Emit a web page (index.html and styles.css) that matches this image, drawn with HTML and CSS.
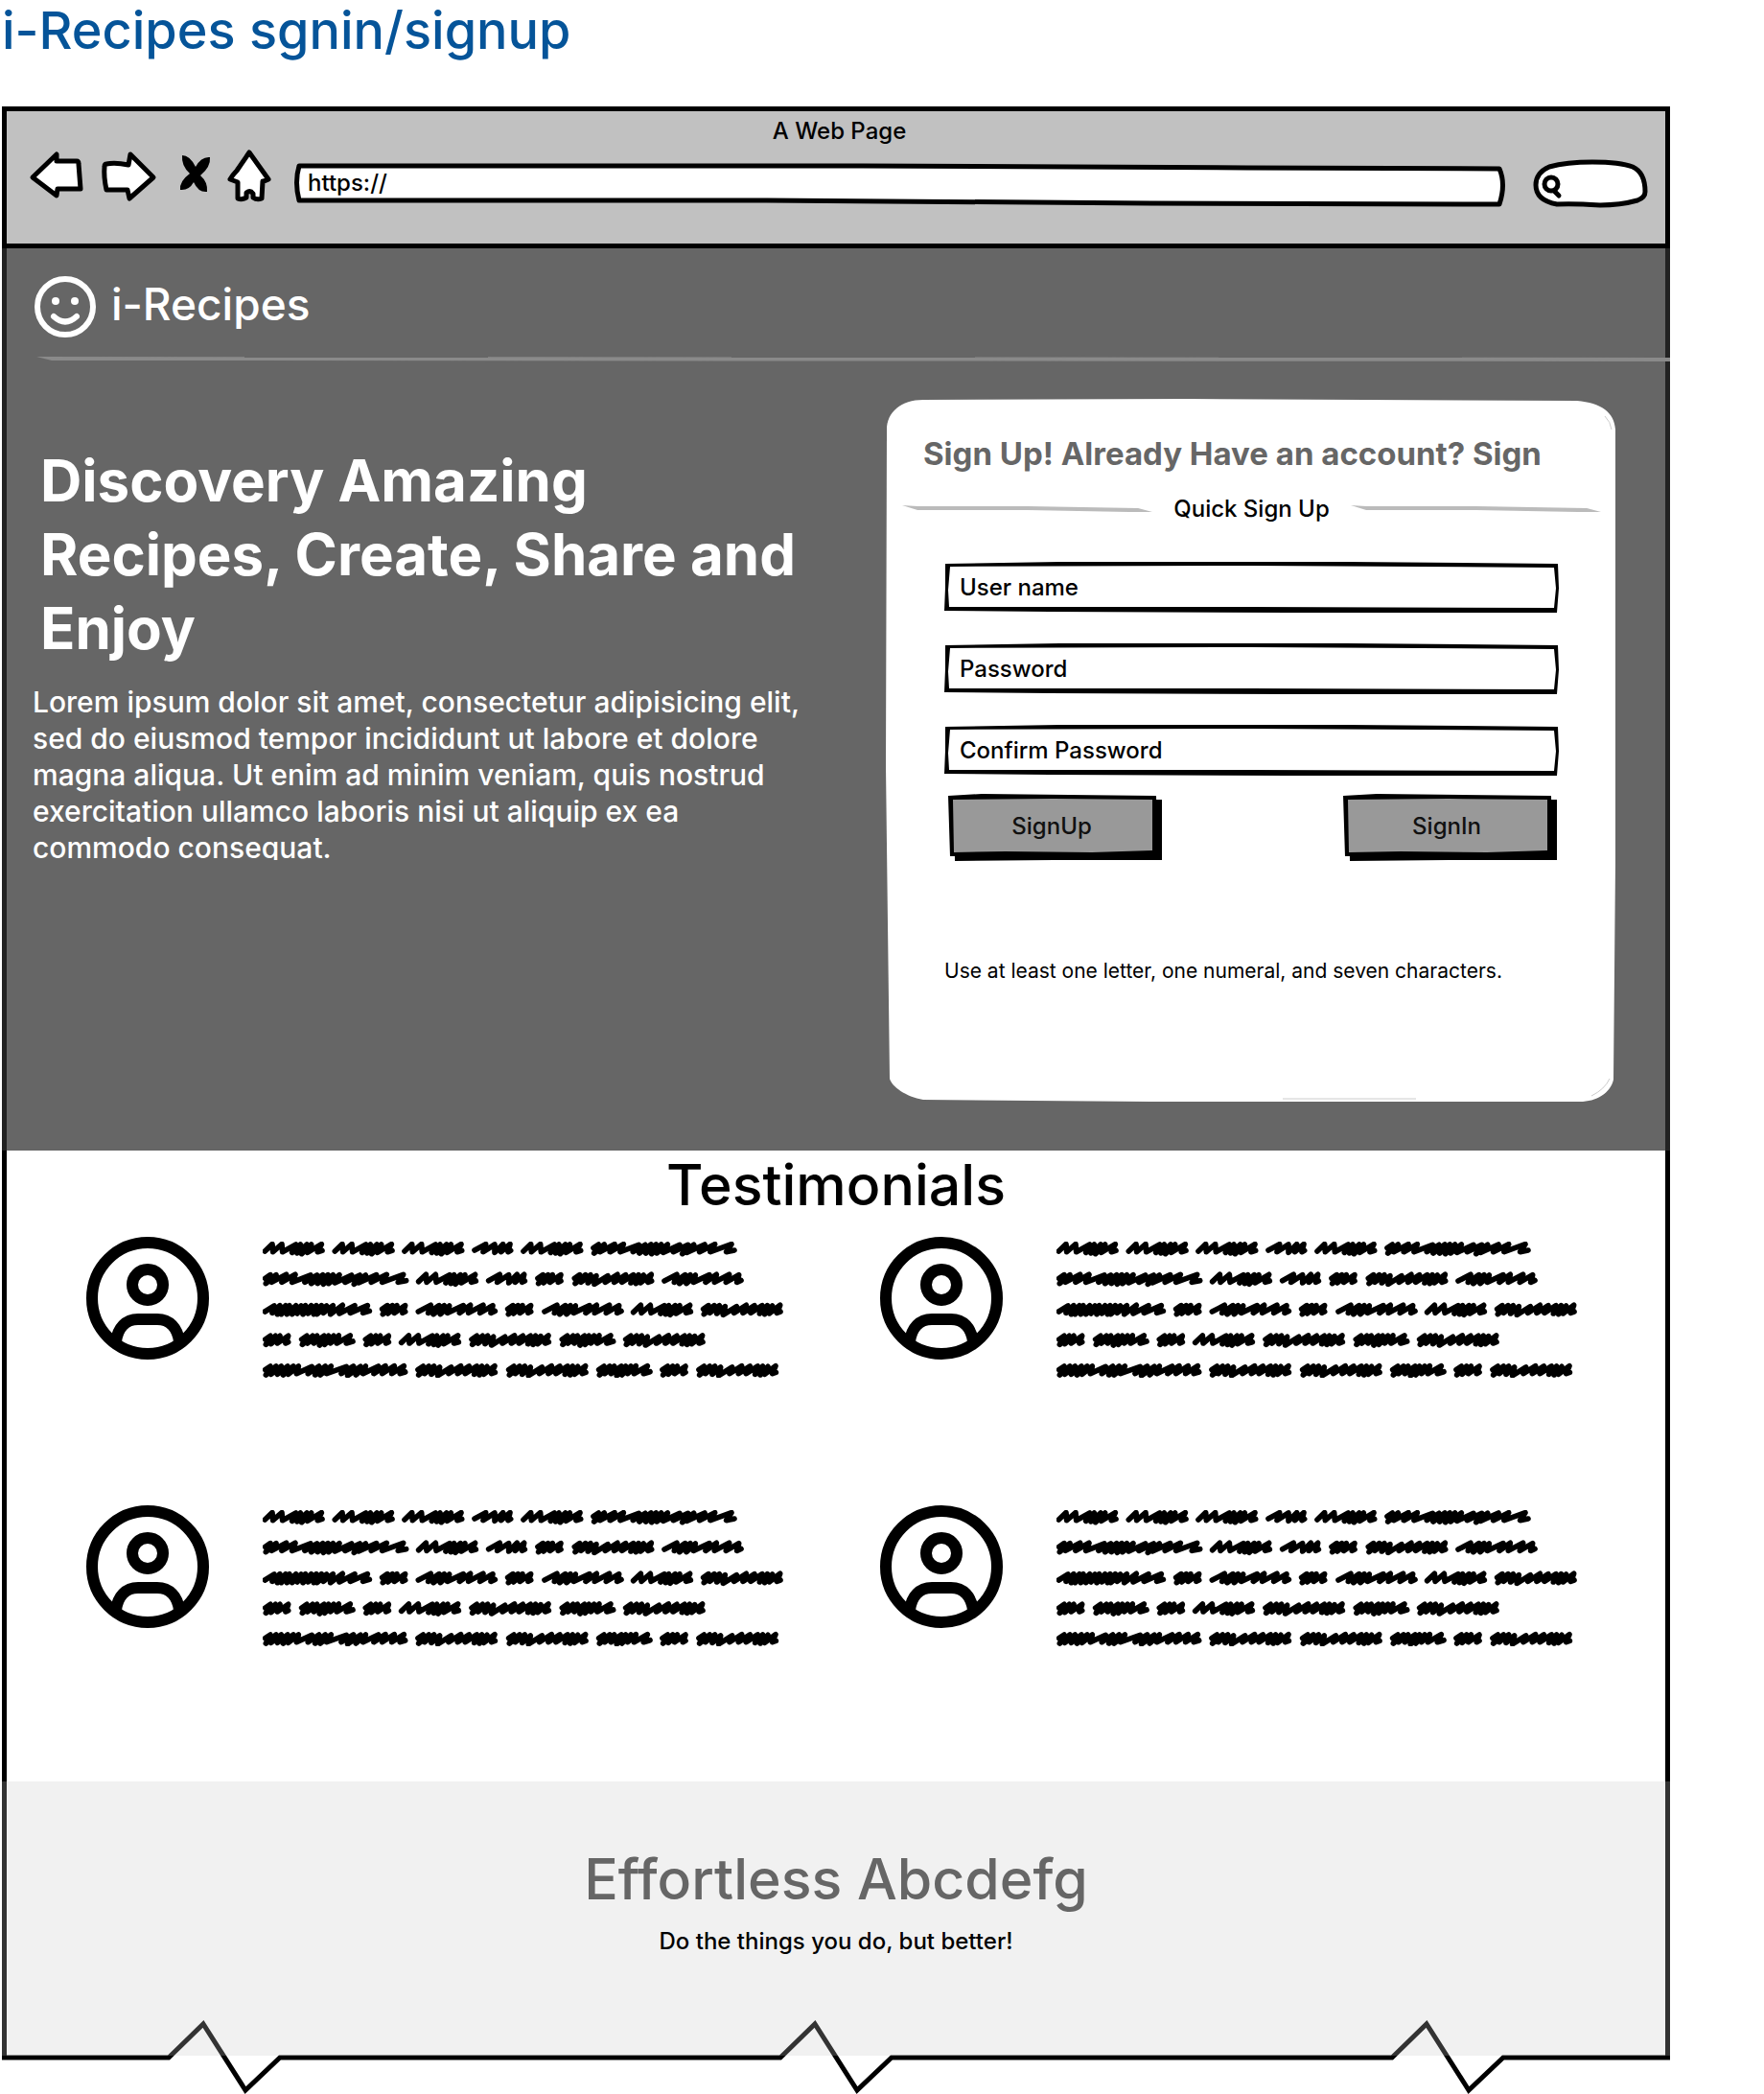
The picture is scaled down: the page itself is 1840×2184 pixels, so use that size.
FILE: index.html
```html
<!DOCTYPE html>
<html lang="en">
<head>
<meta charset="utf-8">
<meta name="viewport" content="width=device-width, initial-scale=1">
<title>i-Recipes</title>
<link rel="stylesheet" href="styles.css">
</head>
<body>
<svg class="sprite" aria-hidden="true">
  <!-- hand-drawn outlines, stretched to their box -->
  <symbol id="field" viewBox="0 0 640 54" preserveAspectRatio="none">
    <path d="M1 2 L120 0 H420 L639 2 L640 28 L638 54 L360 54 L110 53 L0 52 L1 27Z"/>
    <path fill="#fff" d="M6 5 L320 4 L635 6 L637 28 L635 49 L320 48 L5 48 L4 30Z"/>
  </symbol>
  <symbol id="button" viewBox="0 0 224 70" preserveAspectRatio="none">
    <path d="M6 6 H223 V69 L110 69 L7 70Z"/>
    <path d="M0 2 L35 0 L217 2 L218 40 V65 H2Z"/>
    <path fill="#999" d="M5 6 L110 5 L213 6 V59 L150 61 L60 60 L6 61Z"/>
  </symbol>
  <symbol id="dash" viewBox="0 0 260 8" preserveAspectRatio="none">
    <path fill="#bbb" d="M0 0 L16 1 L130 1 L245 3 L260 7 L236 7 L130 5 L16 5Z"/>
  </symbol>
  <symbol id="avatar" viewBox="0 0 128 128">
    <g fill="none" stroke="#000" stroke-width="12">
      <circle cx="64" cy="64" r="58"/>
      <circle cx="64" cy="50" r="16"/>
      <path d="M31 109 C33 95 41 86 54 86 H74 C87 86 95 95 97 109"/>
    </g>
  </symbol>
  <!-- scribbled words -->
  <g id="w1"><path d="M7 30 L30 8 32 32 60 8 62 32 104 9 92 34 118 9 108 36 138 9 122 38 152 9 140 34 184 8 172 32 186 28"/></g>
  <g id="w2"><path d="M7 27 L42 8 34 32 70 9 70 34 96 8 90 32 118 8 112 32 120 28"/></g>
  <g id="w3"><path d="M8 20 L24 9 10 36 40 9 26 34 54 9 46 32 80 9 72 32 80 28"/></g>
  <g id="w4"><path d="M8 20 L24 9 10 36 42 9 28 32 58 9 50 34 76 12 70 38 112 12 104 32 142 8 132 32 168 9 156 32 192 9 184 34 208 9 200 36 224 10 214 34 248 8 238 32 249 28"/></g>
  <g id="w5"><path d="M7 28 L46 8 38 32 72 9 54 36 88 9 76 36 104 10 98 32 148 9 136 32 170 8 164 32 210 8 200 32 240 9 234 32 247 26"/></g>
  <g id="w6"><path d="M8 20 L24 9 10 36 42 9 26 32 56 9 46 32 78 9 64 38 92 9 80 36 108 9 98 32 124 8 118 32 160 8 148 32 168 26"/></g>
  <g id="w7"><path d="M7 28 L36 10 30 32 54 9 46 36 72 9 58 36 84 9 76 36 104 9 92 36 120 10 108 34 134 9 126 36 152 9 142 34 168 9 160 36 184 9 170 36 200 10 190 32 220 9 212 36 250 8 240 34 288 9 274 32 328 9 314 32 334 26"/></g>
  <g id="w8"><path d="M8 20 L24 9 10 36 42 9 28 32 74 8 60 32 102 8 92 32 150 10 132 32 170 10 152 36 188 9 172 36 204 9 190 38 220 9 206 36 240 9 226 34 278 10 258 32 304 10 286 38 322 10 300 34 356 9 340 32 388 8 374 32 440 8 424 32 449 27"/></g>
  <g id="w9"><path d="M8 20 L24 9 10 36 42 9 26 34 58 9 46 34 78 9 64 36 96 9 80 34 112 9 106 32 154 10 142 32 176 9 164 36 196 9 180 36 214 9 200 32 262 10 246 32 284 9 266 38 306 10 292 36 322 9 314 32 362 9 348 32 384 8 374 32 412 8 404 32 442 8 430 32 446 27"/></g>
  <symbol id="quote" viewBox="0 0 1632 426">
    <g fill="none" stroke="#000" stroke-width="17" stroke-linecap="round" stroke-linejoin="round">
      <use href="#w1"/><use href="#w1" x="219"/><use href="#w1" x="437"/><use href="#w2" x="656"/><use href="#w1" x="809"/><use href="#w8" x="1027"/>
      <use href="#w8" y="95"/><use href="#w1" x="481" y="95"/><use href="#w2" x="700" y="95"/><use href="#w3" x="853" y="95"/><use href="#w4" x="968" y="95"/><use href="#w5" x="1250" y="95"/>
      <use href="#w7" y="191"/><use href="#w3" x="366" y="191"/><use href="#w5" x="480" y="191"/><use href="#w3" x="759" y="191"/><use href="#w5" x="875" y="191"/><use href="#w1" x="1153" y="191"/><use href="#w4" x="1371" y="191"/>
      <use href="#w3" y="286"/><use href="#w6" x="114" y="286"/><use href="#w3" x="314" y="286"/><use href="#w1" x="427" y="286"/><use href="#w4" x="646" y="286"/><use href="#w6" x="929" y="286"/><use href="#w4" x="1128" y="286"/>
      <use href="#w9" y="381"/><use href="#w4" x="478" y="381"/><use href="#w4" x="762" y="381"/><use href="#w6" x="1044" y="381"/><use href="#w3" x="1243" y="381"/><use href="#w4" x="1357" y="381"/>
    </g>
  </symbol>
</svg>

<h1 class="page-title">i-Recipes sgnin/signup</h1>

<div class="browser">
  <div class="toolbar">
    <p class="toolbar-title">A Web Page</p>
    <div class="toolbar-row">
      <button class="tool" aria-label="Back"><svg width="58" height="64" viewBox="30 155 58 64"><path class="ink" d="M34 185 L59 161 L59 168 L80 168 Q82 168 82 171 L84 197 L60 197 L59 204Z"/></svg></button>
      <button class="tool" aria-label="Forward"><svg width="62" height="64" viewBox="104 155 62 64"><path class="ink" d="M111 171 Q120 169 134 172 L136 161 L160 185 L135 207 L133 198 L111 198 Q108 184 109 174 Q109 171 111 171Z"/></svg></button>
      <button class="tool" aria-label="Stop"><svg width="38" height="64" viewBox="182 155 38 64"><path d="M190 162 Q198 162 204 174 Q210 163 219 164 Q220 174 209 183 Q217 190 216 200 Q207 201 202 190 Q197 199 188 198 Q187 189 198 181 Q189 173 190 162Z"/></svg></button>
      <button class="tool" aria-label="Home"><svg width="53" height="64" viewBox="236 155 53 64"><path class="ink" d="M260 159 L280 187 Q276 189 274 189 L273 207 Q268 209 264 206 L264 202 Q261 198 257 201 L257 206 Q252 209 248 207 L248 190 L240 187 Q243 182 247 178Z"/></svg></button>
      <div class="sketch url">
        <svg viewBox="305 155 1276 64" preserveAspectRatio="none" aria-hidden="true"><path class="ink" d="M312 173 L600 173 L900 173 L1300 175 L1564 176 Q1571 192 1564 213 L1200 212 L800 209 L312 209 Q307 190 312 173Z"/></svg>
        <input type="text" value="https://" aria-label="Address">
      </div>
      <div class="sketch search">
        <svg viewBox="1597 155 124 64" aria-hidden="true"><path class="ink" d="M1602 193 Q1602 180 1616 174 Q1634 169 1661 169 Q1690 169 1703 174 Q1716 180 1716 200 Q1716 206 1708 209 Q1690 214 1669 214 Q1640 212 1624 213 Q1602 209 1602 193Z"/><g fill="none" stroke="#000" stroke-width="5" stroke-linecap="round"><circle cx="1618" cy="192" r="7"/><path d="M1621 199 L1626 204"/></g></svg>
        <input type="search" aria-label="Search">
      </div>
    </div>
  </div>

  <section class="hero">
    <header class="brand">
      <svg width="64" height="64" viewBox="0 0 64 64" aria-hidden="true"><circle cx="32" cy="32" r="29" fill="none" stroke="#fff" stroke-width="6"/><circle cx="22" cy="26" r="4" fill="#fff"/><circle cx="42" cy="26" r="4" fill="#fff"/><path d="M20 42 Q32 53 44 42" fill="none" stroke="#fff" stroke-width="6" stroke-linecap="round"/></svg>
      <span class="brand-name">i-Recipes</span>
    </header>
    <hr class="rule">
    <div class="hero-body">
      <div class="pitch">
        <h2>Discovery Amazing Recipes, Create, Share and Enjoy</h2>
        <p>Lorem ipsum dolor sit amet, consectetur adipisicing elit, sed do eiusmod tempor incididunt ut labore et dolore magna aliqua. Ut enim ad minim veniam, quis nostrud exercitation ullamco laboris nisi ut aliquip ex ea commodo consequat.</p>
      </div>
      <div class="sketch card">
        <svg viewBox="924 416 761 733" preserveAspectRatio="none" aria-hidden="true">
          <path fill="#fff" d="M925 448 C925 430 940 417 963 417 L1240 416 L1645 418 C1670 420 1684 430 1685 448 L1685 900 L1683 1126 C1680 1140 1665 1149 1648 1149 L1200 1149 L963 1147 C945 1144 930 1133 928 1125 L924 800Z"/>
          <path fill="none" stroke="#ccc" d="M1338 1146 H1477 M1674 434 Q1680 440 1681 448 M1679 1125 Q1674 1136 1660 1143"/>
        </svg>
        <div class="card-body">
          <h3>Sign Up! Already Have an account? Sign</h3>
          <div class="divider">
            <svg aria-hidden="true"><use href="#dash"/></svg>
            <span>Quick Sign Up</span>
            <svg aria-hidden="true"><use href="#dash"/></svg>
          </div>
          <form class="form">
            <div class="sketch field"><svg aria-hidden="true"><use href="#field"/></svg><input type="text" placeholder="User name" aria-label="User name"></div>
            <div class="sketch field"><svg aria-hidden="true"><use href="#field"/></svg><input type="password" placeholder="Password" aria-label="Password"></div>
            <div class="sketch field"><svg aria-hidden="true"><use href="#field"/></svg><input type="password" placeholder="Confirm Password" aria-label="Confirm Password"></div>
            <div class="actions">
              <div class="sketch action"><svg aria-hidden="true"><use href="#button"/></svg><button type="submit">SignUp</button></div>
              <div class="sketch action"><svg aria-hidden="true"><use href="#button"/></svg><button type="button">SignIn</button></div>
            </div>
            <p class="hint">Use at least one letter, one numeral, and seven characters.</p>
          </form>
        </div>
      </div>
    </div>
  </section>

  <section class="testimonials">
    <h2>Testimonials</h2>
    <div class="quotes">
      <article class="quote"><svg class="avatar" role="img" aria-label="Member"><use href="#avatar"/></svg><svg class="scribble" aria-hidden="true"><use href="#quote"/></svg></article>
      <article class="quote"><svg class="avatar" role="img" aria-label="Member"><use href="#avatar"/></svg><svg class="scribble" aria-hidden="true"><use href="#quote"/></svg></article>
      <article class="quote"><svg class="avatar" role="img" aria-label="Member"><use href="#avatar"/></svg><svg class="scribble" aria-hidden="true"><use href="#quote"/></svg></article>
      <article class="quote"><svg class="avatar" role="img" aria-label="Member"><use href="#avatar"/></svg><svg class="scribble" aria-hidden="true"><use href="#quote"/></svg></article>
    </div>
  </section>

  <footer class="tagline">
    <h2>Effortless Abcdefg</h2>
    <p>Do the things you do, but better!</p>
    <svg class="torn-edge" viewBox="2 2104 1740 80" preserveAspectRatio="none" aria-hidden="true">
      <defs><linearGradient id="edge" gradientUnits="userSpaceOnUse" x1="0" y1="2104" x2="0" y2="2184"><stop offset="0.5" stop-color="#333"/><stop offset="0.5" stop-color="#000"/></linearGradient></defs>
      <path fill="none" stroke="url(#edge)" stroke-width="5" d="M2 2146 H176 L212 2111 L256 2180 L292 2146 H814 L850 2111 L894 2180 L930 2146 H1452 L1488 2111 L1532 2180 L1568 2146 H1742"/>
    </svg>
  </footer>
</div>
</body>
</html>
```
FILE: styles.css
```css
* {
  box-sizing: border-box;
}

body,
h1, h2, h3, p {
  margin: 0;
}

body {
  padding: 0 98px 40px 2px;
  background: #fff;
  color: #000;
  font-family: Inter, "Open Sans", sans-serif;
  font-size: 24px;
  font-weight: 500;
  line-height: 30px;
}

h1, h2 {
  font-weight: 500;
}

svg {
  display: block;
}

input,
button {
  padding: 0;
  border: 0;
  background: none;
  color: inherit;
  font: inherit;
}

.sprite {
  position: absolute;
  width: 0;
  height: 0;
}

.ink {
  fill: #fff;
  stroke: #000;
  stroke-width: 5px;
  stroke-linejoin: round;
}

/* a control laid over its hand-drawn outline */
.sketch {
  display: grid;
}

.sketch > * {
  grid-area: 1 / 1;
  width: 100%;
  height: 100%;
  min-width: 0;
}

.page-title {
  margin-bottom: 47px;
  color: #055499;
  font-size: 54px;
  line-height: 64px;
}

.browser {
  border-top: 5px solid #000;
}

/* toolbar */
.toolbar {
  padding: 6px 16px 35px 23px;
  border: solid #000;
  border-width: 0 5px 5px;
  background: #c1c1c1;
}

.toolbar-title {
  margin-bottom: 3px;
  text-align: center;
}

.toolbar-row {
  display: flex;
  gap: 16px;
  height: 64px;
}

.url {
  flex: 1;
}

.url input {
  padding: 6px 16px 0;
}

.search {
  width: 124px;
}

.search input {
  padding: 0 16px 0 36px;
  appearance: none;
}

/* hero */
.hero {
  padding-bottom: 51px;
  border: solid #222;
  border-width: 0 5px;
  background: #666;
  color: #fff;
}

.brand {
  display: flex;
  align-items: center;
  gap: 16px;
  padding: 29px 29px 20px;
}

.brand-name {
  padding-bottom: 6px;
  font-size: 46px;
  line-height: 56px;
}

.rule {
  height: 5px;
  margin: 0 -5px 0 31px;
  border: 0;
  background: #8a8a8a;
  clip-path: polygon(0 0, 100% 1px, 100% 100%, 16px 4px);
}

.hero-body {
  display: grid;
  grid-template-columns: 917fr 761fr;
  padding: 39px 52px 0 0;
}

.pitch {
  max-width: 850px;
  padding: 47px 0 0 27px;
}

.pitch h2 {
  padding-left: 8px;
  font-size: 60px;
  font-weight: 700;
  line-height: 77px;
}

.pitch p {
  max-height: 184px;
  margin-top: 19px;
  overflow: hidden;
  font-size: 30px;
  line-height: 38px;
}

.card {
  color: #000;
}

.card-body {
  padding: 37px 15px 122px 17px;
}

.card h3 {
  padding-left: 22px;
  color: #666;
  font-size: 33px;
  font-weight: 700;
  line-height: 40px;
}

.divider {
  display: flex;
  align-items: center;
  gap: 22px;
  margin-top: 23px;
}

.divider svg {
  flex: 1;
  min-width: 0;
  height: 8px;
}

.form {
  display: grid;
  gap: 32px;
  padding: 40px 44px 0;
}

.field {
  height: 53px;
}

.field input {
  padding: 0 16px;
}

.field input::placeholder {
  color: #000;
  opacity: 1;
}

.actions {
  display: flex;
  justify-content: space-between;
  margin-top: -13px;
  padding: 0 1px 0 4px;
}

.action {
  width: 224px;
  height: 70px;
}

.action button {
  padding: 0 8px 2px 0;
  color: #111;
}

.hint {
  margin-top: 70px;
  font-size: 21px;
  font-weight: 400;
  line-height: 26px;
}

/* testimonials */
.testimonials {
  padding-bottom: 138px;
  border: solid #000;
  border-width: 0 5px;
}

.testimonials h2,
.tagline h2 {
  font-size: 59px;
  line-height: 72px;
  text-align: center;
}

.quotes {
  display: grid;
  grid-template-columns: 1fr 1fr;
  gap: 130px 56px;
  padding: 18px 47px 0 83px;
}

.quote {
  display: flex;
  gap: 56px;
  height: 150px;
}

.avatar {
  flex: none;
  width: 128px;
  height: 128px;
}

.scribble {
  width: 544px;
  height: 142px;
  margin-top: 5px;
}

/* footer with the torn lower edge */
.tagline {
  position: relative;
  padding: 66px 0 104px;
  border: solid #333;
  border-width: 0 5px;
  background: #f1f1f1;
  text-align: center;
}

.tagline h2 {
  margin-bottom: 14px;
  color: #666;
}

.torn-edge {
  position: absolute;
  bottom: -40px;
  left: -5px;
  width: calc(100% + 10px);
  height: 80px;
}
```
